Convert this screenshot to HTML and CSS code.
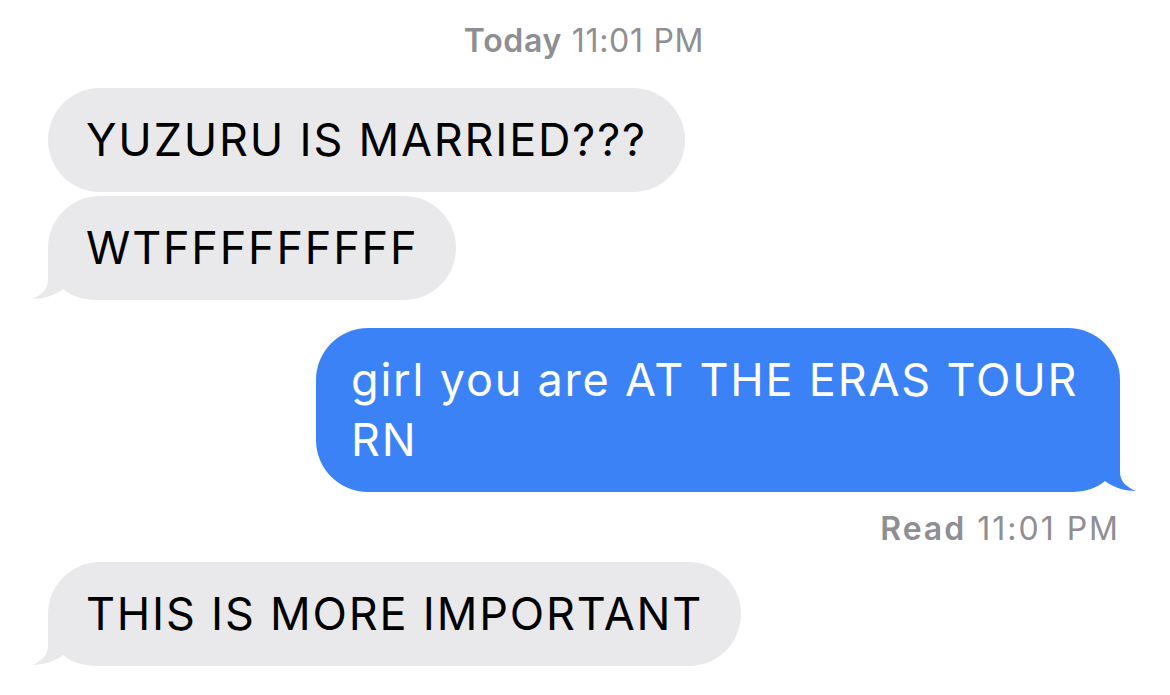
FILE: index.html
```html
<!DOCTYPE html>
<html lang="en">
<head>
  <meta charset="UTF-8">
  <meta name="viewport" content="width=device-width, initial-scale=1">
  <title>Messages</title>
  <link rel="stylesheet" href="styles.css">
</head>
<body>
  <div class="thread">
    <div class="stamp"><b>Today</b> 11:01 PM</div>

    <div class="bubble them"><span>YUZURU IS MARRIED???</span></div>
    <div class="bubble them tail next">
      <svg class="tail-l" viewBox="0 0 70 56"><path d="M18,4 L18,36 C18,45 12,51 2,55 C12,55 24,52 33,45 C42,53 54,56 70,56 L70,4 Z"/></svg>
      <span>WTFFFFFFFFF</span>
    </div>

    <div class="bubble me tail">
      <svg class="tail-r" viewBox="0 0 70 56"><path d="M52,4 L52,36 C52,45 58,51 68,55 C58,55 46,52 37,45 C28,53 16,56 0,56 L0,4 Z"/></svg>
      <span>girl you are AT THE ERAS TOUR RN</span>
    </div>
    <div class="receipt"><b>Read</b> 11:01 PM</div>

    <div class="bubble them tail">
      <svg class="tail-l" viewBox="0 0 70 56"><path d="M18,4 L18,36 C18,45 12,51 2,55 C12,55 24,52 33,45 C42,53 54,56 70,56 L70,4 Z"/></svg>
      <span>THIS IS MORE IMPORTANT</span>
    </div>
  </div>
</body>
</html>
```

FILE: styles.css
```css
body {
  margin: 0;
  background: #fff;
  font-family: Inter, "Liberation Sans", sans-serif;
}
.thread {
  display: flex;
  flex-direction: column;
  align-items: flex-start;
  padding: 24px 50px 0 48px;
}
.stamp {
  align-self: center;
  font-size: 32px;
  line-height: 34px;
  letter-spacing: 0.7px;
  color: #8e8e93;
  margin-bottom: 30px;
}
.stamp b, .receipt b {
  font-weight: 600;
}
.bubble {
  position: relative;
  box-sizing: border-box;
  max-width: 804px;
  padding: 22px 38px;
  border-radius: 52px;
  font-size: 45px;
  line-height: 60px;
  letter-spacing: 1.8px;
}
.bubble span {
  position: relative;
}
.them {
  background: #e9e9eb;
  color: #000;
}
.them.next {
  margin-top: 4px;
}
.me {
  align-self: flex-end;
  padding: 22px 35px;
  background: #3b82f6;
  color: #fff;
  margin-top: 28px;
}
.tail svg {
  position: absolute;
  bottom: 0;
  width: 70px;
  height: 56px;
}
.tail-l {
  left: -18px;
  fill: #e9e9eb;
}
.tail-r {
  right: -18px;
  fill: #3b82f6;
}
.receipt {
  align-self: flex-end;
  font-size: 32px;
  line-height: 34px;
  letter-spacing: 2px;
  color: #8e8e93;
  margin: 20px 0 16px;
}
```
